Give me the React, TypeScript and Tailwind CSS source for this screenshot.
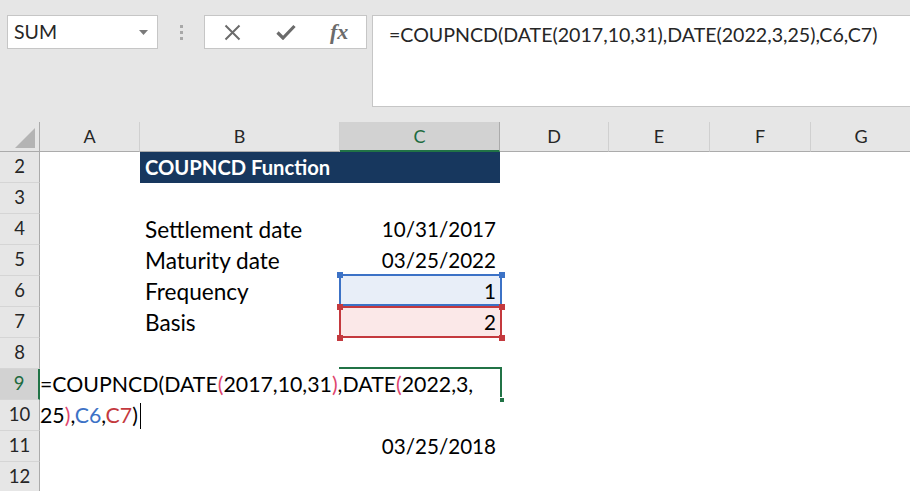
import React from "react";

// column header cells, widths follow the sheet's columns
const COLS = [
  { k: "A", cls: "w-[100px]" },
  { k: "B", cls: "w-[200px]" },
  { k: "C", cls: "w-[160px]", active: true },
  { k: "D", cls: "w-[109px]" },
  { k: "E", cls: "w-[101px]" },
  { k: "F", cls: "w-[101px]" },
  { k: "G", cls: "w-[101px]" },
];

const RowHead = ({ n, active = false }: { n: number; active?: boolean }) => (
  <div
    className={`w-[40px] h-[31px] shrink-0 flex items-center justify-center border-b border-b-[#d5d5d5] text-[18.5px] ${
      active
        ? "bg-[#d2d2d2] text-[#1e6b40] border-r-2 border-r-[#217346]"
        : "bg-[#e6e6e6] text-[#262626] border-r border-r-[#ababab]"
    }`}
  >
    {n}
  </div>
);

const Row = ({ n, children }: { n: number; children?: React.ReactNode }) => (
  <div className="flex h-[31px]">
    <RowHead n={n} />
    {children}
  </div>
);

const Label = ({ children }: { children: React.ReactNode }) => (
  <>
    <div className="w-[100px] shrink-0" />
    <div className="w-[200px] shrink-0 flex items-center pl-[5px] text-[22.6px] text-black whitespace-nowrap">{children}</div>
  </>
);

const Value = ({ children }: { children: React.ReactNode }) => (
  <div className="w-[160px] shrink-0 flex items-center justify-end pr-[4px] text-[20.6px] text-black">{children}</div>
);

const Paren = ({ c }: { c: string }) => <span className="text-[#e0466e]">{c}</span>;

export default function App() {
  return (
    <div className="w-[910px] h-[491px] overflow-hidden bg-white [font-family:Lato,sans-serif]">
      {/* toolbar: name box, buttons, formula bar */}
      <div className="h-[122px] bg-[#e6e6e6] flex items-start pt-[15px] pl-[7px]">
        <div className="w-[151px] h-[34px] bg-white border border-[#c6c6c6] flex items-center justify-between pl-[6px] pr-[9px]">
          <span className="text-[19.5px] text-[#262626]">SUM</span>
          <svg width="9" height="5" viewBox="0 0 9 5">
            <path d="M0 0h9L4.5 5z" fill="#7a7a7a" />
          </svg>
        </div>
        <div className="w-[46px] h-[34px] flex flex-col items-center justify-center gap-[3px]">
          <span className="w-[3px] h-[3px] bg-[#a8a8a8]" />
          <span className="w-[3px] h-[3px] bg-[#a8a8a8]" />
          <span className="w-[3px] h-[3px] bg-[#a8a8a8]" />
        </div>
        <div className="w-[163px] h-[34px] bg-white border border-[#c6c6c6] flex items-center pl-[19px]">
          <svg width="17" height="17" viewBox="0 0 17 17">
            <path d="M1.5 1.5l14 14M15.5 1.5l-14 14" stroke="#6b6b6b" strokeWidth="2" />
          </svg>
          <svg className="ml-[35px]" width="20" height="16" viewBox="0 0 20 16">
            <path d="M1.5 8.5l5.5 5.5L18.5 2" stroke="#6b6b6b" strokeWidth="3.2" fill="none" />
          </svg>
          <span className="ml-[34px] [font-family:'Liberation_Serif',serif] italic font-bold text-[22px] leading-none text-[#6b6b6b]">
            fx
          </span>
        </div>
        <div className="ml-[5px] flex-1 h-[92px] bg-white border border-r-0 border-[#c6c6c6] pl-[16px] pt-[4px] text-[19.6px] text-[#262626] whitespace-nowrap">
          =COUPNCD(DATE(2017,10,31),DATE(2022,3,25),C6,C7)
        </div>
      </div>

      {/* column headers */}
      <div className="flex h-[30px]">
        <div className="w-[40px] shrink-0 bg-[#e6e6e6] border-r border-b border-[#ababab] flex items-end justify-end pr-[4px] pb-[3px]">
          <svg width="20" height="20" viewBox="0 0 20 20">
            <path d="M20 0V20H0z" fill="#b4b4b4" />
          </svg>
        </div>
        {COLS.map((c) => (
          <div
            key={c.k}
            className={`${c.cls} shrink-0 flex items-center justify-center border-r text-[18px] ${
              c.active
                ? "bg-[#d2d2d2] text-[#1e6b40] border-b-2 border-b-[#217346] border-r-[#ababab]"
                : "bg-[#e6e6e6] text-[#262626] border-b border-b-[#ababab] border-r-[#d0d0d0]"
            }`}
          >
            {c.k}
          </div>
        ))}
      </div>

      {/* sheet body */}
      <div className="flex h-[31px]">
        <RowHead n={2} />
        <div className="w-[100px] shrink-0" />
        <div className="w-[360px] shrink-0 bg-[#17375e] flex items-center pl-[5px] text-[20.2px] font-bold text-white">
          COUPNCD Function
        </div>
      </div>
      <Row n={3} />
      <Row n={4}>
        <Label>Settlement date</Label>
        <Value>10/31/2017</Value>
      </Row>
      <Row n={5}>
        <Label>Maturity date</Label>
        <Value>03/25/2022</Value>
      </Row>
      <Row n={6}>
        <Label>Frequency</Label>
        <div className="relative w-[160px] shrink-0 bg-[#e8eef8] flex items-center justify-end pr-[4px] text-[20.6px] text-black">
          1
          <div className="absolute -left-[1px] -right-[2px] -top-[2px] bottom-[1px] border-2 border-[#3c72c6]" />
          <div className="absolute -left-[3px] -top-[4px] w-[6px] h-[6px] bg-[#3c72c6]" />
          <div className="absolute left-[159px] -top-[4px] w-[6px] h-[6px] bg-[#3c72c6]" />
        </div>
      </Row>
      <Row n={7}>
        <Label>Basis</Label>
        <div className="relative w-[160px] shrink-0 bg-[#fbe8e8] flex items-center justify-end pr-[4px] text-[20.6px] text-black">
          2
          <div className="absolute -left-[1px] -right-[2px] -top-[1px] bottom-0 border-2 border-[#c4393e]" />
          <div className="absolute -left-[3px] -top-[3px] w-[6px] h-[6px] bg-[#c4393e]" />
          <div className="absolute left-[159px] -top-[3px] w-[6px] h-[6px] bg-[#c4393e]" />
          <div className="absolute -left-[3px] top-[28px] w-[6px] h-[6px] bg-[#c4393e]" />
          <div className="absolute left-[159px] top-[28px] w-[6px] h-[6px] bg-[#c4393e]" />
        </div>
      </Row>
      <Row n={8} />

      {/* rows 9-10: cell C9 in edit mode, text spills over A:C */}
      <div className="flex">
        <div className="flex flex-col">
          <RowHead n={9} active />
          <RowHead n={10} />
        </div>
        <div className="relative w-[460px] shrink-0 text-[21.3px] leading-[31px] text-black whitespace-nowrap">
          <div>
            =COUPNCD(DATE<Paren c="(" />2017,10,31<Paren c=")" />,DATE<Paren c="(" />2022,3,
          </div>
          <div className="flex items-center">
            <span>
              25<Paren c=")" />,<span className="text-[#3c72c6]">C6</span>,<span className="text-[#c4393e]">C7</span>)
            </span>
            <span className="ml-[2px] w-[1px] h-[26px] bg-black" />
          </div>
          <div className="absolute left-[299px] -top-[2px] w-[163px] h-[33px] border-t-2 border-r-2 border-[#217346]" />
          <div className="absolute left-[459px] top-[28px] w-[6px] h-[6px] bg-[#217346] border border-white" />
        </div>
      </div>

      <Row n={11}>
        <div className="w-[300px] shrink-0" />
        <Value>03/25/2018</Value>
      </Row>
      <Row n={12} />
    </div>
  );
}
